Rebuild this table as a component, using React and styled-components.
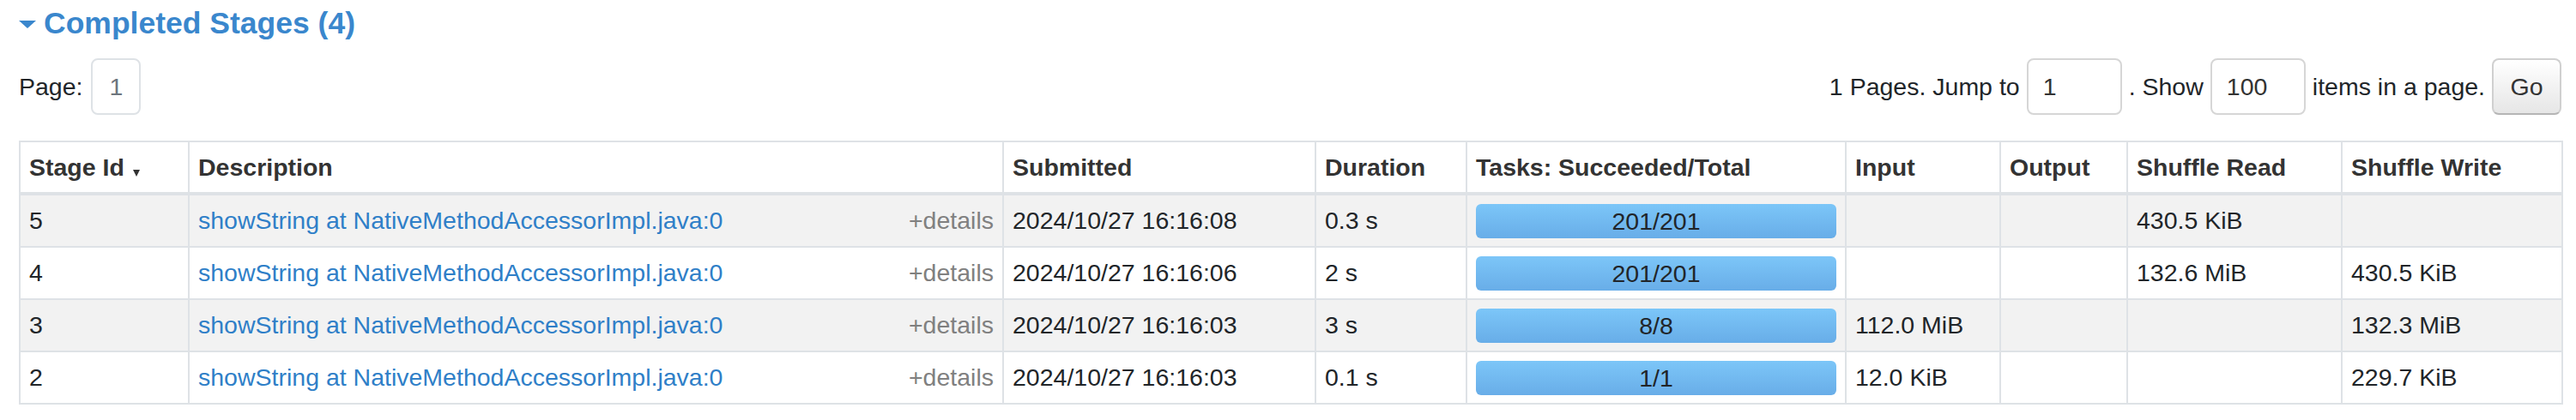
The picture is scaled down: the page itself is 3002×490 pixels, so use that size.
import React from "react";
import styled, { createGlobalStyle } from "styled-components";

const stages = [
  { id: 5, submitted: "2024/10/27 16:16:08", duration: "0.3 s", tasks: "201/201", input: "", output: "", read: "430.5 KiB", write: "" },
  { id: 4, submitted: "2024/10/27 16:16:06", duration: "2 s", tasks: "201/201", input: "", output: "", read: "132.6 MiB", write: "430.5 KiB" },
  { id: 3, submitted: "2024/10/27 16:16:03", duration: "3 s", tasks: "8/8", input: "112.0 MiB", output: "", read: "", write: "132.3 MiB" },
  { id: 2, submitted: "2024/10/27 16:16:03", duration: "0.1 s", tasks: "1/1", input: "12.0 KiB", output: "", read: "", write: "229.7 KiB" },
];

const columns = [
  { label: "Stage Id", width: 197, sorted: true },
  { label: "Description", width: 949 },
  { label: "Submitted", width: 364 },
  { label: "Duration", width: 176 },
  { label: "Tasks: Succeeded/Total", width: 442 },
  { label: "Input", width: 180 },
  { label: "Output", width: 148 },
  { label: "Shuffle Read", width: 250 },
  { label: "Shuffle Write", width: 257 },
];

const App = () => {
  return (
    <>
      <GlobalStyle />
      <Page>
        <Title>
          <svg width="20" height="9" viewBox="0 0 20 9">
            <polygon points="0,0 20,0 10,9" fill="#3a87cd" />
          </svg>
          Completed Stages (4)
        </Title>
        <Paging>
          <PageLeft>
            <span>Page:</span>
            <PageBox>1</PageBox>
          </PageLeft>
          <PageForm>
            <span>1 Pages. Jump to</span>
            <Field>1</Field>
            <span>. Show</span>
            <Field>100</Field>
            <span>items in a page.</span>
            <GoButton>Go</GoButton>
          </PageForm>
        </Paging>
        <Table>
          <colgroup>
            {columns.map((c) => (
              <col key={c.label} style={{ width: c.width }} />
            ))}
          </colgroup>
          <thead>
            <tr>
              {columns.map((c) => (
                <Th key={c.label}>
                  {c.label}
                  {c.sorted && (
                    <SortArrow width="8" height="8" viewBox="0 0 8 8">
                      <polygon points="0,0 8,0 4,8" fill="#333" />
                    </SortArrow>
                  )}
                </Th>
              ))}
            </tr>
          </thead>
          <tbody>
            {stages.map((s) => (
              <Row key={s.id}>
                <Td>{s.id}</Td>
                <Td>
                  <DescCell>
                    <Link href="#">showString at NativeMethodAccessorImpl.java:0</Link>
                    <Details>+details</Details>
                  </DescCell>
                </Td>
                <Td>{s.submitted}</Td>
                <Td>{s.duration}</Td>
                <Td>
                  <Progress>{s.tasks}</Progress>
                </Td>
                <Td>{s.input}</Td>
                <Td>{s.output}</Td>
                <Td>{s.read}</Td>
                <Td>{s.write}</Td>
              </Row>
            ))}
          </tbody>
        </Table>
      </Page>
    </>
  );
};

export default App;

const GlobalStyle = createGlobalStyle`
  body {
    margin: 0;
    background: #fff;
    font-family: "Liberation Sans", Arial, Helvetica, sans-serif;
    font-size: 28.5px;
    color: #212529;
  }
`;

const Page = styled.div`
  padding: 0 17px 0 22px;
`;

// Section heading with collapse arrow
const Title = styled.h4`
  display: flex;
  align-items: center;
  gap: 9px;
  margin: 6px 0 0;
  height: 42px;
  font-size: 35.5px;
  font-weight: bold;
  color: #3a87cd;

  svg {
    margin-top: 2px;
  }
`;

const Paging = styled.div`
  display: flex;
  justify-content: space-between;
  align-items: center;
  margin-top: 20px;
  height: 66px;
`;

const PageLeft = styled.div`
  display: flex;
  align-items: center;
  gap: 10px;
`;

const PageBox = styled.div`
  box-sizing: border-box;
  width: 58px;
  height: 66px;
  border: 2px solid #dee2e6;
  border-radius: 8px;
  display: flex;
  align-items: center;
  justify-content: center;
  color: #6c757d;
`;

const PageForm = styled.div`
  display: flex;
  align-items: center;
  gap: 8px;
`;

const Field = styled.div`
  box-sizing: border-box;
  width: 111px;
  height: 66px;
  padding-left: 17px;
  border: 2px solid #d6d6d6;
  border-radius: 8px;
  display: flex;
  align-items: center;
  color: #333;
`;

const GoButton = styled.button`
  box-sizing: border-box;
  width: 81px;
  height: 66px;
  border: 2px solid #d0d0d0;
  border-bottom-color: #b5b5b5;
  border-radius: 8px;
  background: linear-gradient(#ffffff, #e6e6e6);
  font-family: inherit;
  font-size: 28.5px;
  color: #333;
  padding: 0;
`;

const Table = styled.table`
  margin-top: 30px;
  width: 2963px;
  table-layout: fixed;
  border-collapse: collapse;
`;

const Th = styled.th`
  height: 58px;
  padding: 0 10px;
  border: 2px solid #dee2e6;
  border-bottom-width: 4px;
  text-align: left;
  font-weight: bold;
  color: #333;
  white-space: nowrap;
`;

const SortArrow = styled.svg`
  margin-left: 10px;
  vertical-align: -1px;
`;

const Row = styled.tr`
  &:nth-child(odd) {
    background: #f2f2f2;
  }
`;

const Td = styled.td`
  height: 59px;
  padding: 0 10px;
  border: 2px solid #dee2e6;
  white-space: nowrap;
`;

const DescCell = styled.div`
  display: flex;
  justify-content: space-between;
  align-items: center;
`;

const Link = styled.a`
  color: #2f7fc8;
  text-decoration: none;
`;

const Details = styled.span`
  color: #808080;
`;

// Completed-tasks progress bar
const Progress = styled.div`
  height: 40px;
  line-height: 40px;
  border-radius: 6px;
  background: linear-gradient(#7cc6f8, #68ade8);
  text-align: center;
  color: #212529;
`;
